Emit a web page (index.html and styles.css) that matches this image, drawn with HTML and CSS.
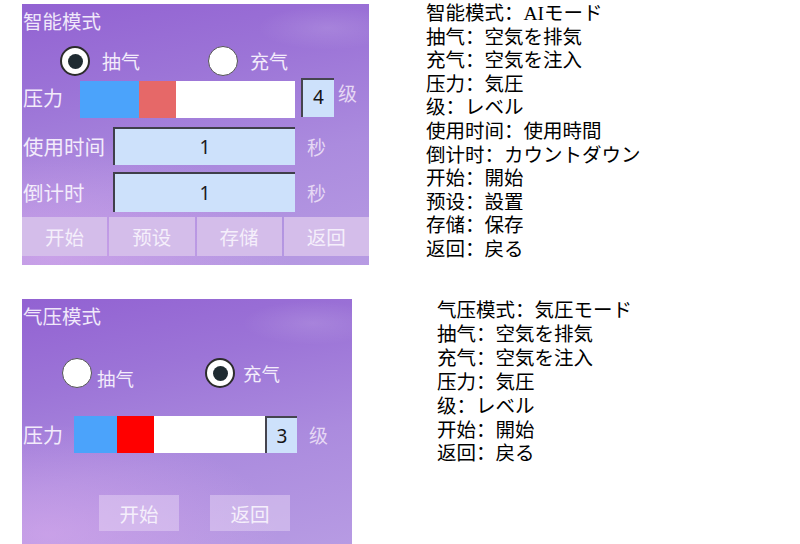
FILE: index.html
```html
<!DOCTYPE html>
<html lang="zh">
<head>
<meta charset="utf-8">
<title>模式</title>
<link rel="stylesheet" href="styles.css">
</head>
<body>
<div class="page">
  <div class="row">
    <div class="panel p1">
      <div class="title">智能模式</div>
      <div class="radios">
        <div class="opt o1"><span class="radio on"></span><span class="rlabel">抽气</span></div>
        <div class="opt"><span class="radio"></span><span class="rlabel">充气</span></div>
      </div>
      <div class="prow">
        <span class="lab">压力</span>
        <div class="bar"><span class="seg blue"></span><span class="seg red"></span><span class="seg white"></span></div>
        <div class="lvl">4</div>
        <span class="unit">级</span>
      </div>
      <div class="irow ir1">
        <span class="ilab">使用时间</span>
        <div class="inp">1</div>
        <span class="sec">秒</span>
      </div>
      <div class="irow ir2">
        <span class="ilab">倒计时</span>
        <div class="inp">1</div>
        <span class="sec">秒</span>
      </div>
      <div class="btns">
        <div class="btn">开始</div>
        <div class="btn">预设</div>
        <div class="btn">存储</div>
        <div class="btn">返回</div>
      </div>
    </div>
    <div class="notes n1">
      <div>智能模式：AIモード</div>
      <div>抽气：空気を排気</div>
      <div>充气：空気を注入</div>
      <div>压力：気圧</div>
      <div>级：レベル</div>
      <div>使用时间：使用時間</div>
      <div>倒计时：カウントダウン</div>
      <div>开始：開始</div>
      <div>预设：設置</div>
      <div>存储：保存</div>
      <div>返回：戻る</div>
    </div>
  </div>
  <div class="row">
    <div class="panel p2">
      <div class="title">气压模式</div>
      <div class="radios">
        <div class="opt o1"><span class="radio"></span><span class="rlabel">抽气</span></div>
        <div class="opt o2"><span class="radio on"></span><span class="rlabel">充气</span></div>
      </div>
      <div class="prow">
        <span class="lab">压力</span>
        <div class="bar"><span class="seg blue"></span><span class="seg red"></span><span class="seg white"></span></div>
        <div class="lvl">3</div>
        <span class="unit">级</span>
      </div>
      <div class="btns">
        <div class="btn">开始</div>
        <div class="btn">返回</div>
      </div>
    </div>
    <div class="notes n2">
      <div>气压模式：気圧モード</div>
      <div>抽气：空気を排気</div>
      <div>充气：空気を注入</div>
      <div>压力：気圧</div>
      <div>级：レベル</div>
      <div>开始：開始</div>
      <div>返回：戻る</div>
    </div>
  </div>
</div>
</body>
</html>
```
FILE: styles.css
```css
html, body {
  margin: 0;
  padding: 0;
  background: #ffffff;
  overflow: hidden;
}
.page {
  display: flex;
  flex-direction: column;
  gap: 34px;
  padding: 4px 0 0 22px;
}
.row {
  display: flex;
  align-items: flex-start;
}
.panel {
  display: flex;
  flex-direction: column;
  box-sizing: border-box;
  font-family: "Noto Sans CJK SC", sans-serif;
  font-size: 20px;
  color: #f3ecfb;
  background:
    radial-gradient(ellipse 70px 22px at 88% 24px, rgba(255, 255, 255, 0.12), rgba(255, 255, 255, 0) 100%),
    radial-gradient(ellipse 70% 45% at 8% 96%, rgba(226, 176, 240, 0.5), rgba(226, 176, 240, 0) 100%),
    linear-gradient(168deg, #9262d2 0%, #9c74d7 30%, #ab8bde 62%, #b79be3 100%);
}
.p1 {
  width: 347px;
  height: 261px;
}
.p2 {
  width: 330px;
  height: 245px;
}
.title {
  height: 26px;
  line-height: 26px;
  margin-top: 4px;
  padding-left: 1px;
  font-size: 19.5px;
  color: #f0e8fa;
}
.radios {
  display: flex;
  height: 30px;
  align-items: center;
}
.opt {
  display: flex;
  align-items: center;
  height: 30px;
  gap: 12px;
}
.radio {
  width: 30px;
  height: 30px;
  box-sizing: border-box;
  border-radius: 50%;
  background: #ffffff;
  border: 1.5px solid #555555;
  display: flex;
  align-items: center;
  justify-content: center;
  flex: none;
}
.radio.on {
  border: 2px solid #2c2c2c;
}
.radio.on::after {
  content: "";
  width: 15px;
  height: 15px;
  border-radius: 50%;
  background: #1f2b31;
}
.rlabel {
  font-size: 19px;
  line-height: 24px;
}
.p1 .radios {
  margin-top: 12px;
  padding-left: 38px;
}
.p1 .o1 {
  width: 148px;
}
.p2 .radios {
  margin-top: 29px;
  padding-left: 40px;
}
.p2 .o1 {
  width: 143px;
  gap: 5px;
  align-items: flex-end;
}
.p2 .o1 .rlabel {
  line-height: 20px;
}
.p2 .o2 {
  gap: 8px;
}
.p2 .rlabel {
  font-size: 18.5px;
}
.prow {
  display: flex;
  align-items: flex-start;
}
.lab {
  box-sizing: border-box;
  padding-left: 1px;
  flex: none;
}
.bar {
  display: flex;
  flex: none;
}
.seg {
  display: block;
  height: 100%;
}
.blue {
  background: #4ba3fb;
}
.white {
  flex: 1;
  background: #ffffff;
}
.lvl {
  box-sizing: border-box;
  background: #cde1fb;
  border-top: 2px solid #45454f;
  border-left: 2px solid #45454f;
  font-family: "Noto Sans", sans-serif;
  font-size: 19px;
  color: #151515;
  display: flex;
  align-items: center;
  justify-content: center;
  flex: none;
}
.unit {
  color: #e6d8f4;
  flex: none;
  font-size: 19px;
}
.p1 .prow {
  margin-top: 2px;
  height: 40px;
}
.p1 .lab {
  width: 58px;
  line-height: 40px;
}
.p1 .bar {
  margin-top: 3px;
  width: 215px;
  height: 37px;
}
.p1 .blue {
  width: 59px;
}
.p1 .red {
  width: 37px;
  background: #e66868;
}
.p1 .lvl {
  margin-left: 6px;
  width: 33px;
  height: 39px;
  padding-bottom: 3px;
}
.p1 .unit {
  margin-left: 4px;
  line-height: 30px;
}
.p2 .prow {
  margin-top: 28px;
  height: 37px;
  align-items: center;
}
.p2 .lab {
  width: 52px;
}
.p2 .bar {
  width: 191px;
  height: 37px;
}
.p2 .blue {
  width: 43px;
}
.p2 .red {
  width: 37px;
  background: #ff0000;
}
.p2 .lvl {
  width: 32px;
  height: 37px;
}
.p2 .unit {
  margin-left: 12px;
}
.irow {
  display: flex;
  align-items: center;
}
.ir1 {
  margin-top: 9px;
  height: 38px;
}
.ir2 {
  margin-top: 7px;
  height: 40px;
}
.ilab {
  box-sizing: border-box;
  width: 91px;
  padding-left: 1px;
  flex: none;
  font-size: 20.5px;
}
.inp {
  box-sizing: border-box;
  width: 182px;
  height: 100%;
  background: #cde1fb;
  border-top: 2px solid #3f3f4a;
  border-left: 2px solid #3f3f4a;
  font-family: "Noto Sans", sans-serif;
  font-size: 19px;
  color: #1a1a1a;
  display: flex;
  align-items: center;
  justify-content: center;
  flex: none;
}
.sec {
  margin-left: 12px;
  color: #e6d8f4;
  font-size: 19px;
}
.btns {
  display: flex;
}
.btn {
  display: flex;
  align-items: center;
  justify-content: center;
  font-size: 19.5px;
  color: #f5effb;
}
.p1 .btns {
  margin-top: 5px;
  height: 39px;
  gap: 2px;
}
.p1 .btn {
  flex: 1;
  background: #d4bdea;
}
.p2 .btns {
  margin-top: 42px;
  height: 36px;
  gap: 31px;
  padding-left: 77px;
}
.p2 .btn {
  width: 80px;
  background: rgba(238, 224, 248, 0.42);
}
.notes {
  font-family: "Liberation Serif", "Noto Sans CJK JP", serif;
  font-size: 19.5px;
  color: #000000;
}
.n1 {
  margin-left: 57px;
  margin-top: -2px;
  line-height: 23.6px;
}
.n2 {
  margin-left: 85px;
  margin-top: 0;
  line-height: 23.9px;
}
```
